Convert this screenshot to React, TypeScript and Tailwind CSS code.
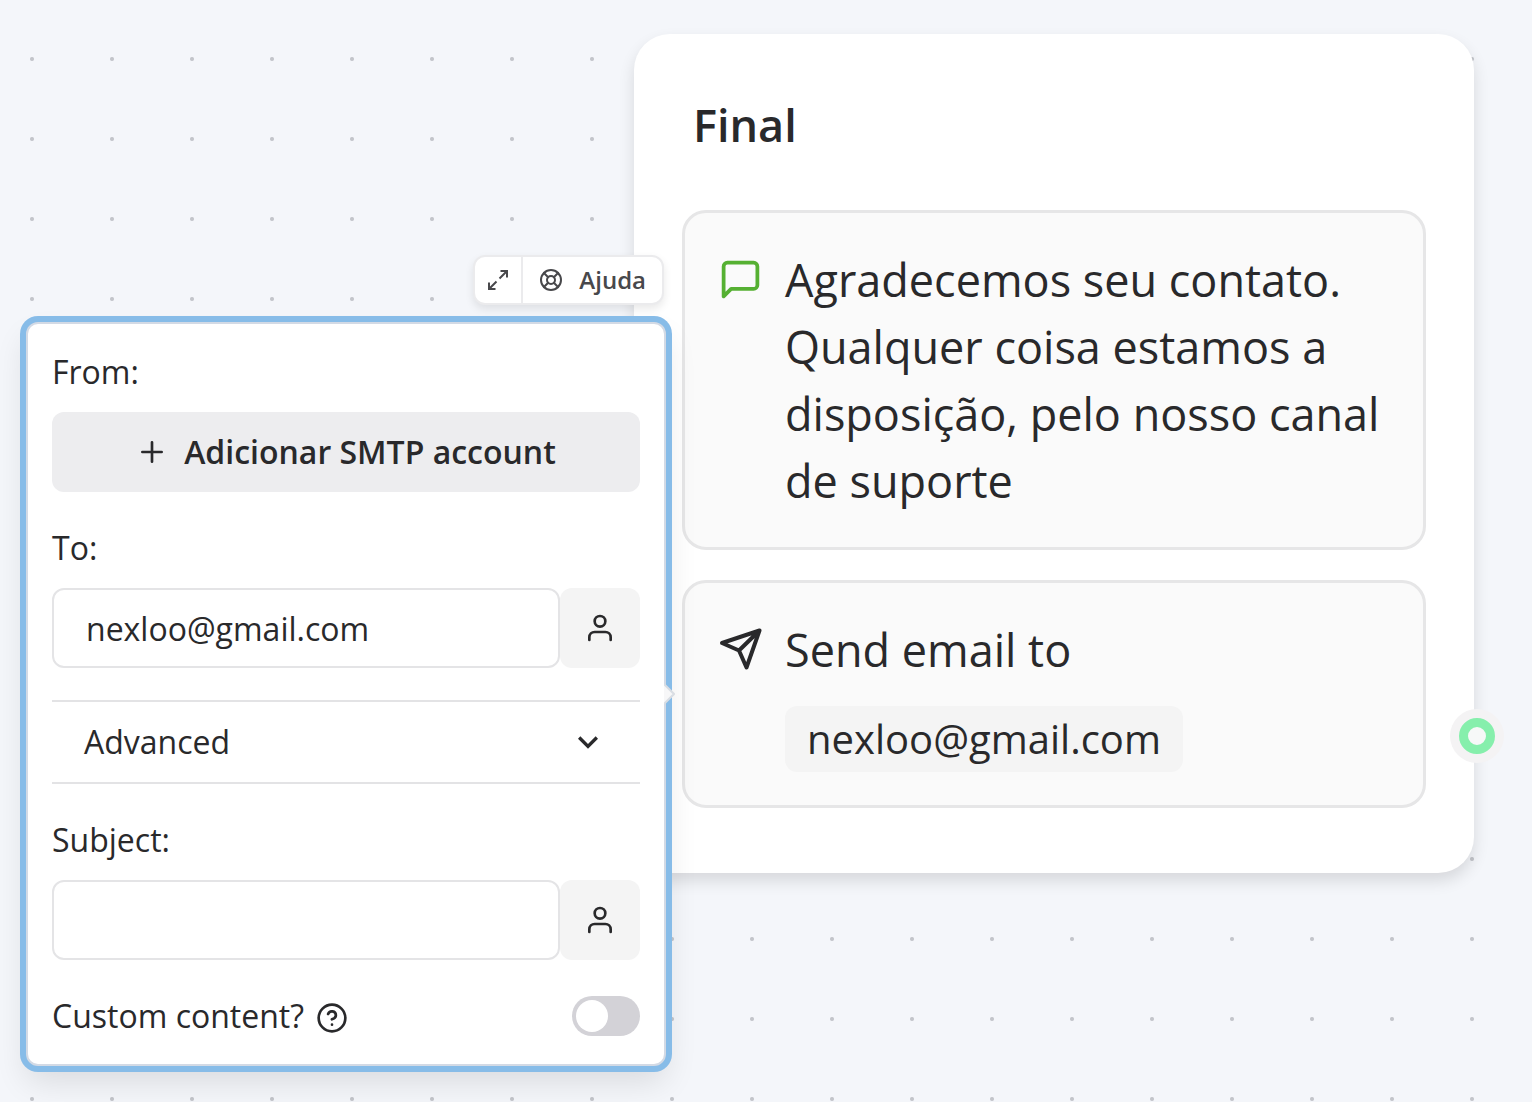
import { useState } from "react";
import type { ReactNode } from "react";

type IconProps = { className?: string; children: ReactNode };

function Icon({ className = "size-8", children }: IconProps) {
  return (
    <svg
      viewBox="0 0 24 24"
      fill="none"
      stroke="currentColor"
      strokeWidth={2}
      strokeLinecap="round"
      strokeLinejoin="round"
      aria-hidden="true"
      className={`shrink-0 ${className}`}
    >
      {children}
    </svg>
  );
}

function UserIcon() {
  return (
    <Icon>
      <path d="M20 21v-2a4 4 0 0 0-4-4H8a4 4 0 0 0-4 4v2" />
      <circle cx="12" cy="7" r="4" />
    </Icon>
  );
}

function VariableInput({ id, label, initial }: { id: string; label: string; initial: string }) {
  const [value, setValue] = useState(initial);
  return (
    <div className="flex flex-col gap-4">
      <label htmlFor={id} className="leading-[48px] font-medium">
        {label}
      </label>
      <div className="flex">
        <input
          id={id}
          type="text"
          value={value}
          onChange={(e) => setValue(e.target.value)}
          className="h-20 min-w-0 flex-1 rounded-xl border-2 border-[#e4e4e6] bg-white px-8 outline-none"
        />
        <button
          type="button"
          aria-label={`Insert variable in ${label}`}
          className="flex size-20 items-center justify-center rounded-xl bg-[#f4f4f4]"
        >
          <UserIcon />
        </button>
      </div>
    </div>
  );
}

function Toolbar() {
  return (
    <div className="mr-[2px] flex h-[50px] overflow-hidden rounded-xl border-2 border-[#ebebed] bg-white text-[#48484b] shadow-[0_4px_8px_rgba(0,0,0,0.09)]">
      <button type="button" aria-label="Expand" className="flex w-12 items-center justify-center border-r-2 border-[#ebebed]">
        <svg viewBox="0 0 24 24" fill="none" stroke="currentColor" strokeWidth={2} aria-hidden="true" className="size-6">
          <path d="M14.5 3H21v6.500M9.500 21H3v-6.500M21 3l-7.500 7.500M3 21l7.500-7.500" />
        </svg>
      </button>
      <button type="button" className="flex items-center gap-4 px-4 text-2xl font-semibold">
        <Icon className="size-6">
          <circle cx="12" cy="12" r="10" />
          <circle cx="12" cy="12" r="4" />
          <path d="m4.930 4.930 4.240 4.240M14.830 9.170l4.240-4.240M14.830 14.830l4.240 4.240M9.170 14.830l-4.240 4.240" />
        </Icon>
        Ajuda
      </button>
    </div>
  );
}

function EmailSettings() {
  const [custom, setCustom] = useState(false);
  return (
    <section className="relative flex w-full flex-col gap-8 rounded-xl border-2 border-[#d3dae5] bg-white p-6 text-[32px] shadow-[0_0_0_6px_#87bce8,0_16px_32px_rgba(0,0,0,0.11)]">
      <div className="flex flex-col gap-4">
        <p className="leading-[48px]">From:</p>
        <button
          type="button"
          className="flex h-20 items-center justify-center gap-4 rounded-xl bg-[#ededef] font-semibold"
        >
          <Icon>
            <path d="M12 4.750v14.500M4.750 12h14.500" />
          </Icon>
          Adicionar SMTP account
        </button>
      </div>

      <VariableInput id="to" label="To:" initial="nexloo@gmail.com" />

      <button
        type="button"
        aria-expanded="false"
        className="flex h-[84px] items-center justify-between border-y-2 border-[#e3e3e5] px-8"
      >
        Advanced
        <svg viewBox="0 0 24 24" fill="currentColor" aria-hidden="true" className="size-10">
          <path d="M16.590 8.590 12 13.170 7.410 8.590 6 10l6 6 6-6z" />
        </svg>
      </button>

      <VariableInput id="subject" label="Subject:" initial="" />

      <div className="flex h-12 items-center justify-between">
        <label htmlFor="custom" className="flex items-center gap-3 font-medium">
          Custom content?
          <Icon className="mt-1 size-8">
            <circle cx="12" cy="12" r="10" />
            <path d="M9.090 9a3 3 0 0 1 5.830 1c0 2-3 3-3 3M12 17h.01" />
          </Icon>
        </label>
        <input
          id="custom"
          type="checkbox"
          role="switch"
          checked={custom}
          onChange={(e) => setCustom(e.target.checked)}
          className="flex h-10 w-[68px] appearance-none rounded-full bg-[#d3d2d7] p-1 before:size-8 before:rounded-full before:bg-white checked:justify-end checked:bg-[#3b82f6]"
        />
      </div>

      <svg viewBox="0 0 11 20" aria-hidden="true" className="absolute top-[360px] -right-[11px] h-5 w-[11px]">
        <path d="M0 0 10 10 0 20z" fill="#f7f7f8" />
        <path d="M0 0 10 10 0 20" fill="none" stroke="#d9dde3" strokeWidth="2" />
      </svg>
    </section>
  );
}

function Block({ icon, children }: { icon: ReactNode; children: ReactNode }) {
  return (
    <li className="flex items-start gap-[22px] rounded-3xl border-[3px] border-[#e6e6e7] bg-[#fafafa] px-[33px] py-[33px] text-[45px] leading-[67px]">
      <span className="pt-[11px]">{icon}</span>
      <div className="min-w-0 flex-1">{children}</div>
    </li>
  );
}

function FinalNode() {
  return (
    <article className="relative w-full rounded-[36px] bg-white px-12 pt-[57px] pb-[65px] shadow-[0_8px_16px_rgba(0,0,0,0.12)]">
      <h2 className="px-[11px] text-[45px] leading-[67px] font-semibold">Final</h2>
      <ul className="mt-[52px] flex flex-col gap-[30px]">
        <Block
          icon={
            <Icon className="size-[45px] text-[#55b032]">
              <path d="M21 15a2 2 0 0 1-2 2H7l-4 4V5a2 2 0 0 1 2-2h14a2 2 0 0 1 2 2z" />
            </Icon>
          }
        >
          Agradecemos seu contato. Qualquer coisa estamos a disposição, pelo nosso canal de suporte
        </Block>
        <Block
          icon={
            <svg
              viewBox="0 0 45 45"
              fill="none"
              stroke="currentColor"
              strokeWidth={4}
              strokeLinecap="round"
              strokeLinejoin="round"
              aria-hidden="true"
              className="size-[45px]"
            >
              <path d="M41.500 3.500 4 16 21 23.500 28.500 40.500zM21 23.500 41.500 3.500" />
            </svg>
          }
        >
          <p>Send email to</p>
          <span className="mt-[23px] inline-flex h-[66px] items-center rounded-xl bg-[#f4f4f4] px-[22px] pb-[2px] align-top text-[40px] font-medium">
            nexloo@gmail.com
          </span>
        </Block>
      </ul>
      <span className="absolute top-[675px] -right-[30px] flex size-[54px] items-center justify-center rounded-full bg-[#f4f3f4]">
        <span className="size-9 rounded-full border-[9px] border-[#86efac] bg-[#f7f8f8]" />
      </span>
    </article>
  );
}

export default function App() {
  return (
    <main className="relative min-h-screen overflow-hidden bg-[#f4f6fa] bg-[radial-gradient(circle,#c3c5ca_1.500px,transparent_2.500px)] bg-size-[80px_80px] bg-position-[-8px_19px] font-['Open_Sans',sans-serif] text-[#29292b]">
      <div className="absolute top-[34px] left-[634px] w-[840px]">
        <FinalNode />
      </div>
      <div className="absolute top-[255px] left-[26px] flex w-[640px] flex-col items-end gap-[17px]">
        <Toolbar />
        <EmailSettings />
      </div>
    </main>
  );
}
